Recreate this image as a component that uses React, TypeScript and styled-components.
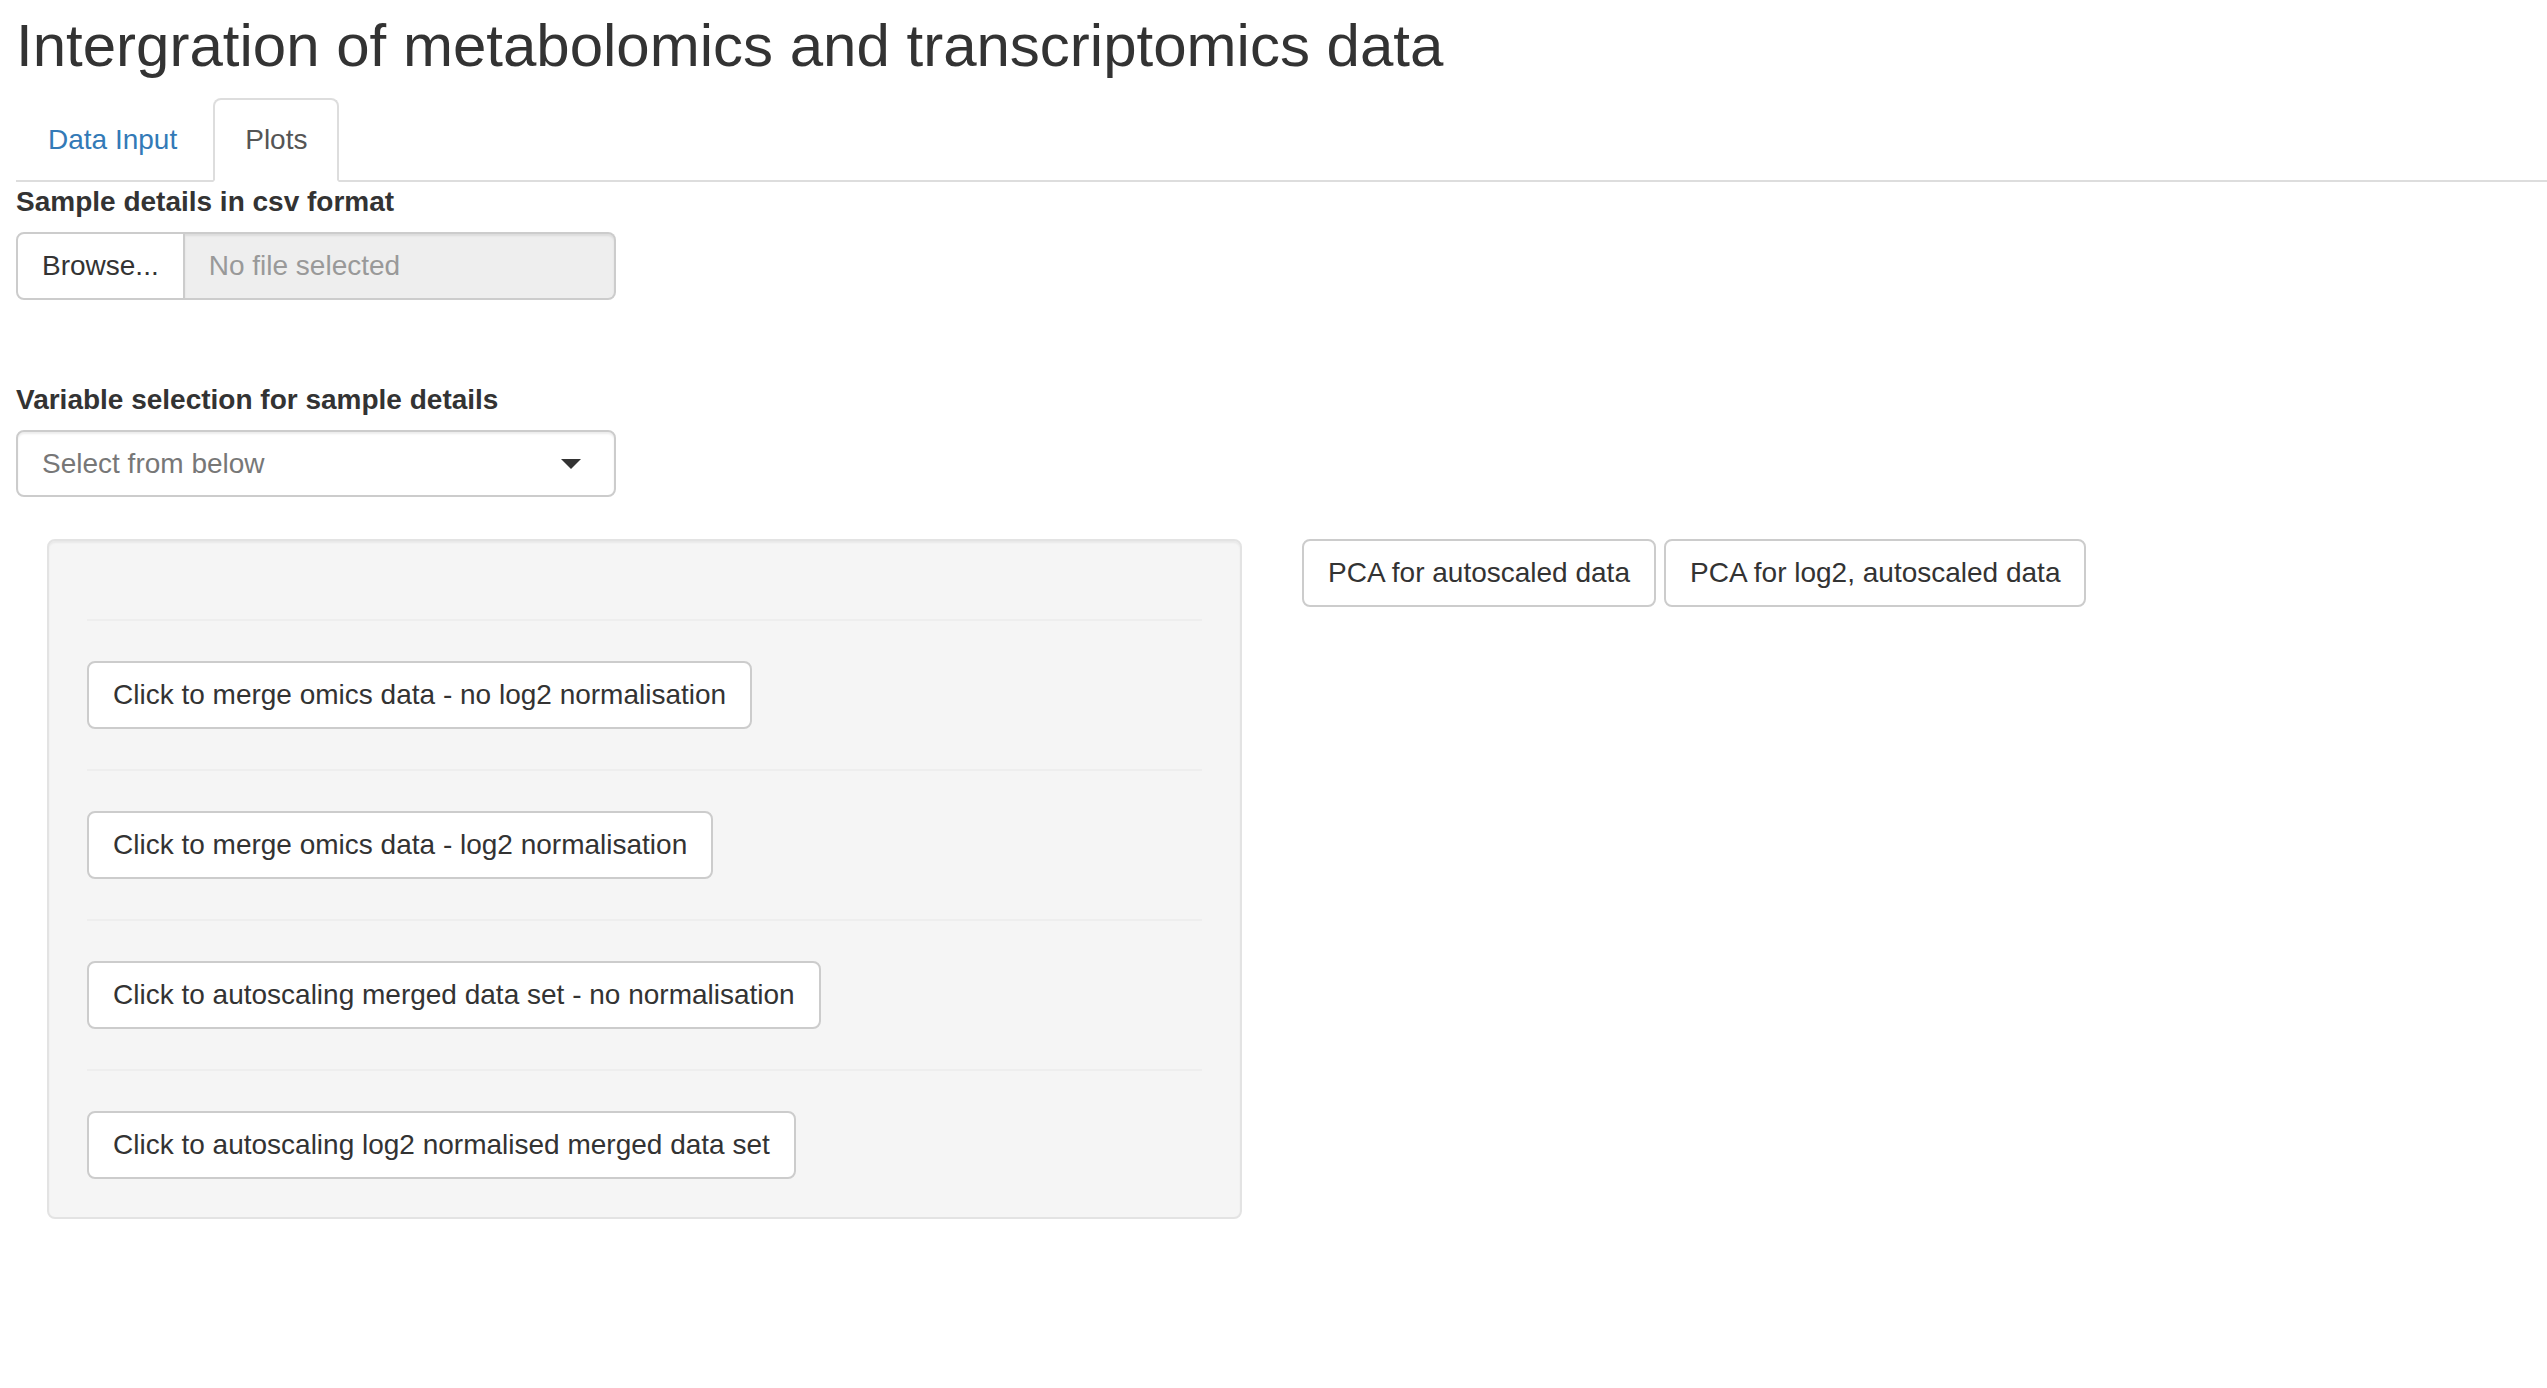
import React from "react";
import styled, { createGlobalStyle } from "styled-components";

const GlobalStyle = createGlobalStyle`
  html, body {
    margin: 0;
    padding: 0;
    background: #ffffff;
  }
  body {
    font-family: "Liberation Sans", Arial, Helvetica, sans-serif;
    font-size: 28px;
    line-height: 40px;
    color: #333333;
  }
  * { box-sizing: border-box; }
`;

const Page = styled.div`
  padding: 13px 0 0 16px;
`;

const Title = styled.h2`
  margin: 0 0 19px 0;
  font-size: 60px;
  line-height: 66px;
  font-weight: 400;
  color: #333333;
`;

const TabList = styled.ul`
  display: flex;
  list-style: none;
  margin: 0;
  padding: 0;
  border-bottom: 2px solid #dddddd;
`;

const TabItem = styled.li`
  margin-bottom: -2px;
`;

const TabLink = styled.a<{ $active?: boolean }>`
  display: block;
  margin-right: 4px;
  padding: 20px 30px;
  line-height: 40px;
  border: 2px solid ${(p) => (p.$active ? "#dddddd" : "transparent")};
  border-bottom-color: ${(p) => (p.$active ? "#ffffff" : "transparent")};
  border-radius: 8px 8px 0 0;
  background: ${(p) => (p.$active ? "#ffffff" : "transparent")};
  color: ${(p) => (p.$active ? "#555555" : "#337ab7")};
  text-decoration: none;
  cursor: pointer;
`;

const FormGroup = styled.div<{ $gap?: number }>`
  width: 600px;
  margin-bottom: ${(p) => p.$gap ?? 0}px;
`;

const Label = styled.label`
  display: block;
  font-weight: 700;
  line-height: 40px;
  margin-bottom: 10px;
`;

const InputGroup = styled.div`
  display: flex;
  height: 68px;
`;

const BrowseButton = styled.span`
  display: flex;
  align-items: center;
  padding: 0 24px;
  border: 2px solid #cccccc;
  border-radius: 8px 0 0 8px;
  background: #ffffff;
  color: #333333;
  white-space: nowrap;
`;

const FileName = styled.div`
  flex: 1;
  display: flex;
  align-items: center;
  padding: 0 24px;
  border: 2px solid #cccccc;
  border-left: none;
  border-radius: 0 8px 8px 0;
  background: #eeeeee;
  color: #999999;
  box-shadow: inset 0 2px 2px rgba(0, 0, 0, 0.075);
`;

const SelectBox = styled.div`
  position: relative;
  display: flex;
  align-items: center;
  height: 67px;
  padding: 0 24px;
  border: 2px solid #cccccc;
  border-radius: 8px;
  background: #ffffff;
  color: #777777;
  box-shadow: inset 0 2px 2px rgba(0, 0, 0, 0.075);
`;

const Caret = styled.span`
  position: absolute;
  right: 33px;
  top: 50%;
  margin-top: -5px;
  width: 0;
  height: 0;
  border-style: solid;
  border-width: 10px 10px 0 10px;
  border-color: #333333 transparent transparent transparent;
`;

const Row = styled.div`
  display: grid;
  grid-template-columns: 1195px auto;
  column-gap: 60px;
  padding-left: 31px;
  margin-top: 42px;
  align-items: start;
`;

const Well = styled.div`
  display: flex;
  flex-direction: column;
  align-items: flex-start;
  padding: 38px;
  border: 2px solid #e3e3e3;
  border-radius: 8px;
  background: #f5f5f5;
  box-shadow: inset 0 2px 2px rgba(0, 0, 0, 0.05);
`;

const Rule = styled.hr`
  align-self: stretch;
  margin: 40px 0;
  border: 0;
  border-top: 2px solid #eeeeee;
  height: 0;
`;

const Button = styled.button`
  height: 68px;
  padding: 12px 24px;
  border: 2px solid #cccccc;
  border-radius: 8px;
  background: #ffffff;
  color: #333333;
  font-family: inherit;
  font-size: 28px;
  line-height: 40px;
  white-space: nowrap;
  cursor: pointer;
`;

const ButtonBar = styled.div`
  display: flex;
  gap: 8px;
`;

const mergeButtons = [
  "Click to merge omics data - no log2 normalisation",
  "Click to merge omics data - log2 normalisation",
  "Click to autoscaling merged data set - no normalisation",
  "Click to autoscaling log2 normalised merged data set",
];

export default function App() {
  return (
    <>
      <GlobalStyle />
      <Page>
        <Title>Intergration of metabolomics and transcriptomics data</Title>
        <TabList>
          <TabItem>
            <TabLink>Data Input</TabLink>
          </TabItem>
          <TabItem>
            <TabLink $active>Plots</TabLink>
          </TabItem>
        </TabList>

        <FormGroup $gap={80}>
          <Label>Sample details in csv format</Label>
          <InputGroup>
            <BrowseButton>Browse...</BrowseButton>
            <FileName>No file selected</FileName>
          </InputGroup>
        </FormGroup>

        <FormGroup>
          <Label>Variable selection for sample details</Label>
          <SelectBox>
            Select from below
            <Caret />
          </SelectBox>
        </FormGroup>

        <Row>
          <Well>
            {mergeButtons.map((label) => (
              <React.Fragment key={label}>
                <Rule />
                <Button>{label}</Button>
              </React.Fragment>
            ))}
          </Well>
          <ButtonBar>
            <Button>PCA for autoscaled data</Button>
            <Button>PCA for log2, autoscaled data</Button>
          </ButtonBar>
        </Row>
      </Page>
    </>
  );
}
